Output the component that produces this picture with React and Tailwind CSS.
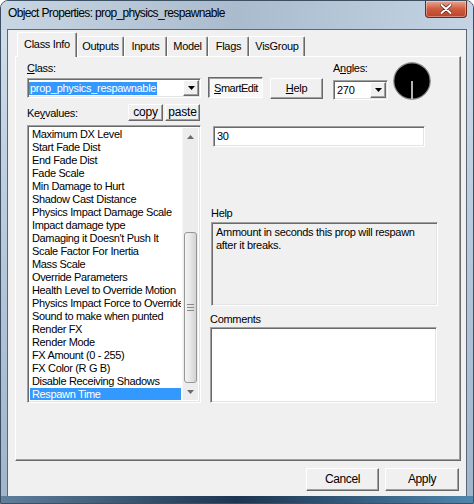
import React from "react";

const items = [
  "Maximum DX Level",
  "Start Fade Dist",
  "End Fade Dist",
  "Fade Scale",
  "Min Damage to Hurt",
  "Shadow Cast Distance",
  "Physics Impact Damage Scale",
  "Impact damage type",
  "Damaging it Doesn't Push It",
  "Scale Factor For Inertia",
  "Mass Scale",
  "Override Parameters",
  "Health Level to Override Motion",
  "Physics Impact Force to Override Motion",
  "Sound to make when punted",
  "Render FX",
  "Render Mode",
  "FX Amount (0 - 255)",
  "FX Color (R G B)",
  "Disable Receiving Shadows",
  "Respawn Time",
];

const raised =
  "border border-t-white border-l-white border-r-[#696969] border-b-[#696969] shadow-[inset_-1px_-1px_0_#a0a0a0] bg-[#f0f0f0]";
const sunken =
  "border border-t-[#a0a0a0] border-l-[#a0a0a0] border-r-white border-b-white shadow-[inset_1px_1px_0_#696969,inset_-1px_-1px_0_#e3e3e3]";

function DownArrow({ color = "#000" }) {
  return (
    <svg width="7" height="4" viewBox="0 0 7 4">
      <path d="M0 0h7L3.5 4z" fill={color} />
    </svg>
  );
}

function UpArrow({ color = "#000" }) {
  return (
    <svg width="7" height="4" viewBox="0 0 7 4">
      <path d="M0 4h7L3.5 0z" fill={color} />
    </svg>
  );
}

function Tab({ label, w, selected }) {
  if (selected) {
    return (
      <div
        className={`relative z-10 -mb-px h-[25px] ${w} bg-[#f0f0f0] border-t border-l border-r border-t-white border-l-white border-r-[#696969] shadow-[inset_-1px_0_0_#a0a0a0] rounded-t-[2px] flex justify-center pt-[5px] leading-[13px]`}
      >
        {label}
      </div>
    );
  }
  return (
    <div
      className={`h-[20px] ${w} border-t border-l border-r border-t-white border-l-white border-r-[#696969] shadow-[inset_-1px_0_0_#a0a0a0] rounded-t-[2px] flex justify-center pt-[3px] leading-[13px]`}
    >
      {label}
    </div>
  );
}

export default function App() {
  return (
    <div className="w-[474px] h-[504px] bg-white font-['Liberation_Sans',Arial,sans-serif] text-[11px] tracking-[-0.3px] text-black">
      <div className="w-full h-full flex flex-col rounded-t-[8px] border border-[#3d4f63] bg-gradient-to-b from-[#d3dfeb] via-[#b6c8da] to-[#9fb5ca] overflow-hidden">
        {/* Title bar */}
        <div className="h-[29px] shrink-0 flex items-start bg-gradient-to-r from-[#c9d6e3] via-[#a9bbcd] to-[#c4d4e4]">
          <div className="ml-[7px] mt-[5px] text-[12px] leading-[15px] tracking-[-0.65px]">
            Object Properties: prop_physics_respawnable
          </div>
          <div className="ml-auto mr-[6px] w-[42px] h-[17px] rounded-b-[4px] border border-t-0 border-[#6b2a1d] bg-gradient-to-b from-[#e9a593] via-[#cf5b3f] to-[#b8432a] flex items-center justify-center shadow-[inset_0_0_0_1px_rgba(255,255,255,0.35)]">
            <svg width="12" height="10" viewBox="0 0 12 10">
              <path d="M1.5 1l9 8M10.5 1l-9 8" stroke="#5a2318" strokeWidth="3.4" strokeLinecap="round" />
              <path d="M1.5 1l9 8M10.5 1l-9 8" stroke="#fff" strokeWidth="2" strokeLinecap="round" />
            </svg>
          </div>
        </div>

        {/* Client area */}
        <div className="mx-[7px] h-[466px] shrink-0 bg-[#f0f0f0] flex flex-col shadow-[0_0_0_1px_#5b6775]">
          {/* Tabs */}
          <div className="mt-[2px] ml-[9px] h-[24px] flex items-end">
            <Tab label="Class Info" w="w-[60px]" selected />
            <Tab label="Outputs" w="w-[47px]" />
            <Tab label="Inputs" w="w-[43px]" />
            <Tab label="Model" w="w-[41px]" />
            <Tab label="Flags" w="w-[41px]" />
            <Tab label="VisGroup" w="w-[56px]" />
          </div>

          {/* Tab panel */}
          <div className={`ml-[7px] w-[446px] h-[405px] ${raised} flex flex-col`}>
            {/* Top row */}
            <div className="flex items-start mt-[5px] ml-[11px]">
              <div className="w-[174px] flex flex-col">
                <div className="leading-[13px]">
                  <span className="underline">C</span>lass:
                </div>
                <div className={`mt-[3px] h-[20px] bg-white ${sunken} flex items-center pl-[1px] pr-[1px]`}>
                  <span className="bg-[#3399ff] text-white leading-[13px] pl-[1px] pr-[1px]">
                    prop_physics_respawnable
                  </span>
                  <div className={`ml-auto w-[16px] h-[16px] ${raised} flex items-center justify-center`}>
                    <DownArrow />
                  </div>
                </div>
              </div>
              <div className="ml-[7px] mt-[15px] w-[55px] h-[21px] border border-t-[#696969] border-l-[#696969] border-r-white border-b-white shadow-[inset_1px_1px_0_#a0a0a0] bg-[#f8f8f8] flex items-center justify-center pt-[1px] pl-[1px] leading-[13px] tracking-[-0.5px]">
                <span className="underline">S</span>martEdit
              </div>
              <div className={`ml-[7px] mt-[16px] w-[53px] h-[21px] ${raised} flex items-center justify-center leading-[13px]`}>
                <span className="underline">H</span>elp
              </div>
              <div className="ml-[10px] flex flex-col w-[55px]">
                <div className="leading-[13px]">
                  A<span className="underline">n</span>gles:
                </div>
                <div className={`mt-[5px] h-[20px] bg-white ${sunken} flex items-center pl-[3px] pr-[1px]`}>
                  <span className="leading-[13px]">270</span>
                  <div className={`ml-auto w-[16px] h-[16px] ${raised} flex items-center justify-center`}>
                    <DownArrow />
                  </div>
                </div>
              </div>
              <svg className="ml-[5px]" width="38" height="38" viewBox="0 0 38 38">
                <circle cx="19" cy="19" r="18.2" fill="#000" stroke="#8a8a8a" strokeWidth="1.2" />
                <line x1="19" y1="19" x2="19" y2="37" stroke="#fff" strokeWidth="1.4" />
              </svg>
            </div>

            {/* Lower section */}
            <div className="flex items-start mt-[4px] ml-[11px]">
              {/* Keyvalues list */}
              <div className="w-[174px] flex flex-col">
                <div className="h-[17px] flex items-start">
                  <div className="mt-[3px] leading-[13px]">
                    Ke<span className="underline">y</span>values:
                  </div>
                  <div className={`ml-auto w-[35px] h-[17px] ${raised} flex items-center justify-center leading-[13px] text-[12px] tracking-[-0.2px]`}>
                    copy
                  </div>
                  <div className={`ml-[2px] mr-[1px] w-[35px] h-[17px] ${raised} flex items-center justify-center leading-[13px] text-[12px] tracking-[-0.2px]`}>
                    paste
                  </div>
                </div>
                <div className={`mt-[4px] h-[278px] bg-white ${sunken} flex p-[2px]`}>
                  <div className="w-[153px] flex flex-col overflow-hidden tracking-[-0.35px]">
                    {items.map((t, i) => {
                      const sel = i === items.length - 1;
                      return (
                        <div
                          key={t}
                          className={`h-[13px] leading-[13px] pl-[2px] whitespace-nowrap ${sel ? "bg-[#3399ff] text-white" : ""}`}
                        >
                          {t}
                        </div>
                      );
                    })}
                  </div>
                  <div className="ml-[1px] w-[16px] flex flex-col bg-[#ececec] border-l border-[#f7f7f7]">
                    <div className="h-[17px] flex items-center justify-center">
                      <UpArrow color="#6b6b6b" />
                    </div>
                    <div className="flex-1" />
                    <div className="h-[151px] mx-[1px] rounded-[3px] border border-[#979797] bg-gradient-to-r from-[#f4f4f4] via-[#e6e6e6] to-[#d3d3d3] flex flex-col items-center justify-center gap-[2px]">
                      <div className="w-[7px] h-px bg-[#8a8a8a]" />
                      <div className="w-[7px] h-px bg-[#8a8a8a]" />
                      <div className="w-[7px] h-px bg-[#8a8a8a]" />
                    </div>
                    <div className="h-[17px] flex items-center justify-center">
                      <DownArrow color="#6b6b6b" />
                    </div>
                  </div>
                </div>
              </div>

              {/* Right side */}
              <div className="ml-[9px] w-[228px] flex flex-col">
                <div className={`mt-[22px] ml-[3px] w-[212px] h-[21px] bg-white ${sunken} flex items-center pl-[3px] leading-[13px]`}>
                  30
                </div>
                <div className="mt-[60px] ml-[1px] leading-[13px]">Help</div>
                <div className={`mt-[2px] ml-[1px] w-[227px] h-[84px] bg-[#f0f0f0] ${sunken} pl-[4px] pt-[3px] leading-[13px]`}>
                  Ammount in seconds this prop will respawn
                  <br />
                  after it breaks.
                </div>
                <div className="mt-[7px] leading-[13px]">Comments</div>
                <div className={`mt-[1px] w-[227px] h-[76px] bg-white ${sunken}`} />
              </div>
            </div>
          </div>

          {/* Bottom buttons */}
          <div className="mt-[7px] mr-[7px] flex justify-end gap-[6px]">
            <div className={`w-[73px] h-[23px] ${raised} flex items-center justify-center leading-[13px] text-[12px] tracking-[-0.4px]`}>
              Cancel
            </div>
            <div className={`w-[74px] h-[23px] ${raised} flex items-center justify-center leading-[13px] text-[12px] tracking-[-0.4px]`}>
              Apply
            </div>
          </div>
        </div>

        {/* Bottom frame */}
        <div className="flex-1 bg-gradient-to-r from-[#5f7f9c] via-[#1d3550] to-[#4f86ad]" />
      </div>
    </div>
  );
}
